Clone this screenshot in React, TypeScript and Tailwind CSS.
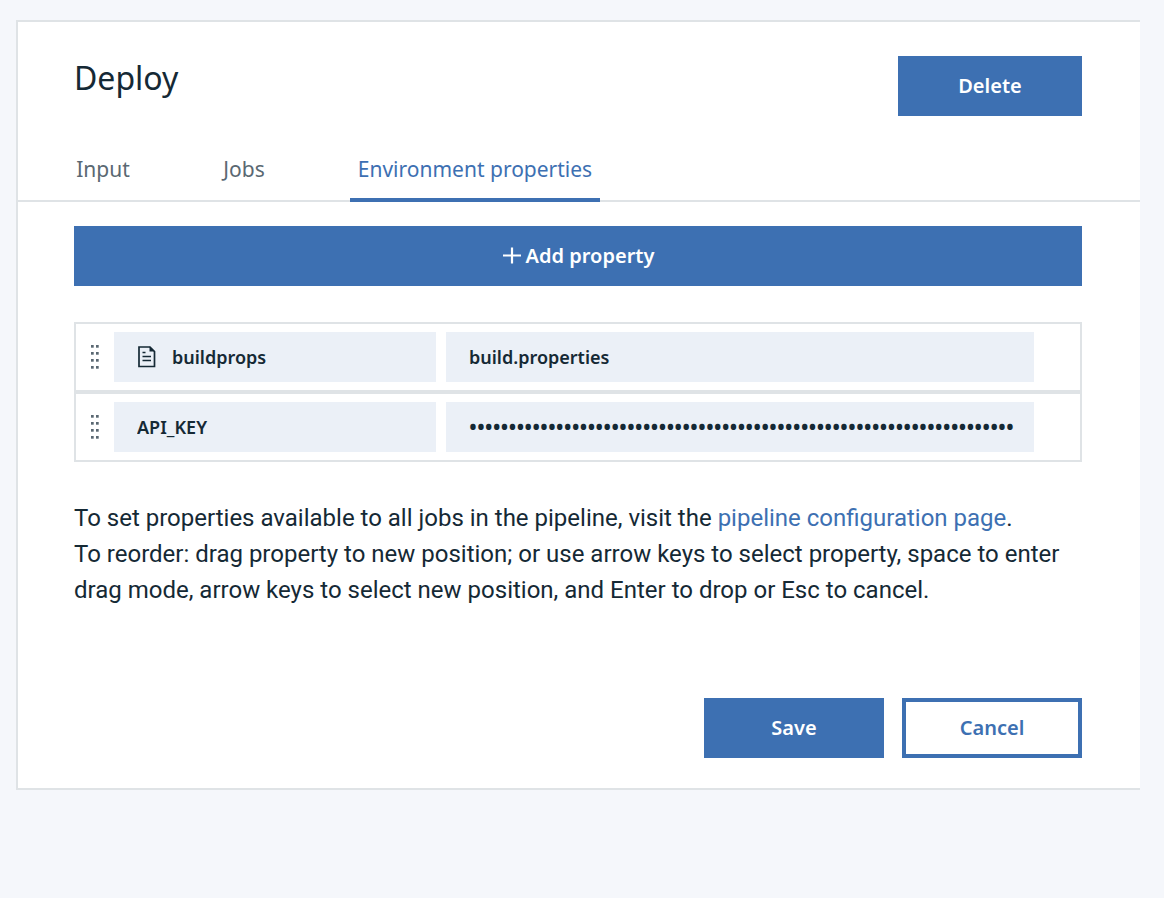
import { useState } from "react";

const tabs = [
  { label: "Input", width: "w-[70px]" },
  { label: "Jobs", width: "w-[62px]" },
  { label: "Environment properties", width: "w-[250px]" },
];

function DragHandle() {
  return (
    <svg width="8" height="24" viewBox="0 0 8 24" fill="#5a6872" aria-hidden="true">
      {[0, 7, 14, 21].map((y) => (
        <g key={y}>
          <rect x="0" y={y} width="2.700" height="2.700" />
          <rect x="5" y={y} width="2.700" height="2.700" />
        </g>
      ))}
    </svg>
  );
}

function FileIcon() {
  return (
    <svg width="18" height="22" viewBox="0 0 18 22" fill="none" stroke="#152935" aria-hidden="true">
      <path d="M1 1h11l4.500 4.500V20.500H1z" strokeWidth="1.700" />
      <path d="M11.500 0.500L17 5.500H11.500z" fill="#152935" stroke="none" />
      <path d="M4.500 6.500h3M4.500 10.500h8.500M4.500 14.500h8.500" strokeWidth="1.400" />
    </svg>
  );
}

type RowProps = { name: string; value: string; secret?: boolean; file?: boolean };

function PropertyRow({ name, value, secret, file }: RowProps) {
  return (
    <li className="flex items-center border-2 border-[#dfe3e6] py-2 pr-[46px]">
      <button type="button" aria-label={`Move ${name}`} className="flex w-[38px] shrink-0 justify-center">
        <DragHandle />
      </button>
      <div className="flex h-[50px] w-[322px] shrink-0 items-center bg-[#ebf0f7] px-[23px]">
        {file && (
          <span className="mr-4 shrink-0 pl-px">
            <FileIcon />
          </span>
        )}
        <input
          aria-label="Property name"
          defaultValue={name}
          className="w-full min-w-0 bg-transparent text-lg font-semibold outline-none"
        />
      </div>
      <input
        aria-label={`Value of ${name}`}
        type={secret ? "password" : "text"}
        defaultValue={value}
        className={
          secret
            ? "ml-[10px] h-[50px] min-w-0 grow bg-[#ebf0f7] pr-5 pl-[23px] text-[21px] font-semibold outline-none"
            : "ml-[10px] h-[50px] min-w-0 grow bg-[#ebf0f7] pr-5 pl-[23px] text-lg font-semibold outline-none"
        }
      />
    </li>
  );
}

export default function App() {
  const [active, setActive] = useState(2);
  return (
    <div className="min-h-screen bg-[#f5f7fb] pt-5 pr-6 pb-10 pl-4 font-['Noto_Sans',sans-serif] text-[#152935]">
      <main className="border-2 border-r-0 border-[#dfe3e6] bg-white pb-[30px]">
        <header className="flex items-start justify-between pt-[34px] pr-[58px] pl-14">
          <h1 className="text-[32px] leading-[44px]">Deploy</h1>
          <button type="button" className="h-[60px] w-[184px] bg-[#3d70b2] text-xl font-semibold text-white">
            Delete
          </button>
        </header>

        <nav role="tablist" className="mt-8 flex gap-[75px] border-b-2 border-[#dfe3e6] pl-[50px]">
          {tabs.map((tab, i) => (
            <button
              key={tab.label}
              type="button"
              role="tab"
              aria-selected={i === active}
              onClick={() => setActive(i)}
              className={`${tab.width} -mb-0.5 h-[54px] border-b-4 pb-2 text-center text-[21px] leading-7 whitespace-nowrap ${
                i === active ? "border-[#3d70b2] text-[#3d70b2]" : "border-transparent text-[#5a6872]"
              }`}
            >
              {tab.label}
            </button>
          ))}
        </nav>

        <section className="pt-6 pr-[58px] pl-14">
          <button
            type="button"
            className="flex h-[60px] w-full items-center justify-center gap-1 bg-[#3d70b2] text-xl font-semibold text-white"
          >
            <svg width="20" height="20" viewBox="0 0 20 20" stroke="currentColor" strokeWidth="2.200" aria-hidden="true">
              <path d="M10 1.500v16M1 9.500h18" />
            </svg>
            Add property
          </button>

          <ul className="mt-9">
            <PropertyRow name="buildprops" value="build.properties" file />
            <PropertyRow name="API_KEY" value={"x".repeat(69)} secret />
          </ul>

          <div className="mt-[38px] font-['Roboto',sans-serif] text-2xl leading-9">
            <p>
              To set properties available to all jobs in the pipeline, visit the{" "}
              <a href="#configuration" className="text-[#3d70b2]">
                pipeline configuration page
              </a>
              .
            </p>
            <p>
              To reorder: drag property to new position; or use arrow keys to select property, space to enter drag mode,
              arrow keys to select new position, and Enter to drop or Esc to cancel.
            </p>
          </div>

          <div className="mt-[90px] flex justify-end gap-[18px] text-xl font-semibold">
            <button type="button" className="h-[60px] w-[180px] bg-[#3d70b2] text-white">
              Save
            </button>
            <button type="button" className="h-[60px] w-[180px] border-4 border-[#3d70b2] text-[#3d70b2]">
              Cancel
            </button>
          </div>
        </section>
      </main>
    </div>
  );
}
